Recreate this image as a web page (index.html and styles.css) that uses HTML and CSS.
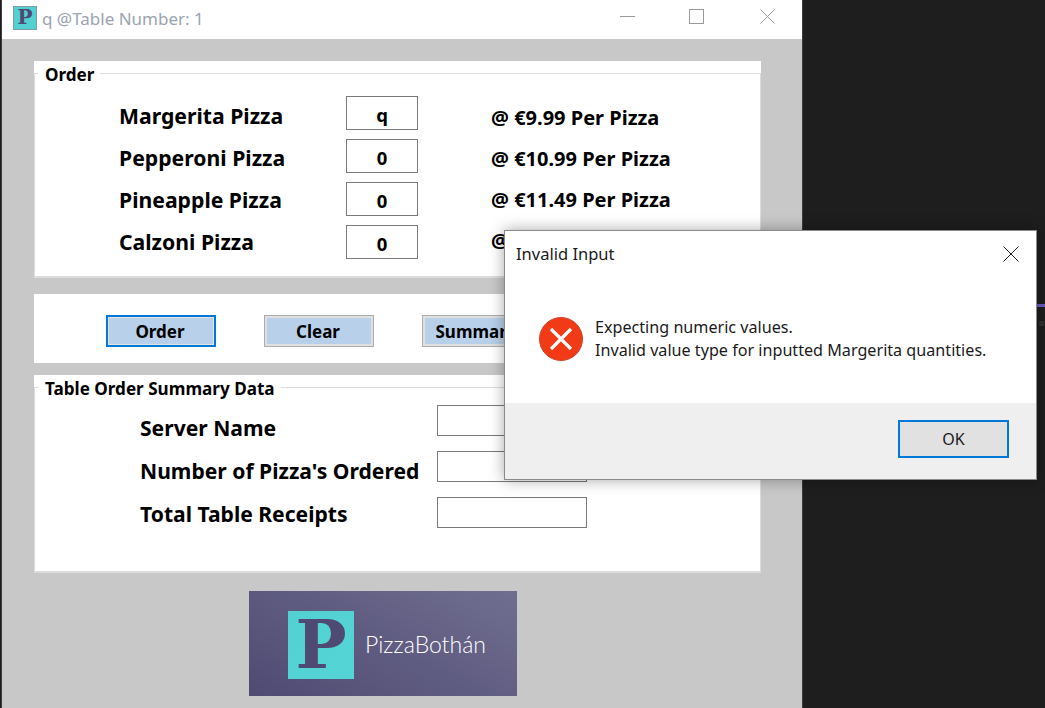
FILE: index.html
```html
<!DOCTYPE html>
<html lang="en">
<head>
<meta charset="utf-8">
<title>q @Table Number: 1</title>
<link rel="stylesheet" href="styles.css">
</head>
<body>
<div class="desktop">
  <div class="accent-line"></div>
  <div class="accent-dots"></div>
  <main class="app-window">
    <header class="titlebar">
      <span class="app-icon">P</span>
      <span class="app-title">q @Table Number: 1</span>
      <div class="window-controls">
        <svg class="ctl ctl-min" width="15" height="15" viewBox="0 0 15 15"><path d="M0 7.5H15" stroke="#9a9a9a" fill="none"/></svg>
        <svg class="ctl ctl-max" width="15" height="15" viewBox="0 0 15 15"><rect x="0.5" y="0.5" width="14" height="14" stroke="#9a9a9a" fill="none"/></svg>
        <svg class="ctl ctl-close" width="15" height="15" viewBox="0 0 15 15"><path d="M0.5 0.5L14.5 14.5M14.5 0.5L0.5 14.5" stroke="#9a9a9a" fill="none"/></svg>
      </div>
    </header>
    <div class="content">
      <section class="panel panel-order">
        <fieldset class="group group-order">
          <legend>Order</legend>
          <div class="order-grid">
            <div class="col col-names">
              <span>Margerita Pizza</span>
              <span>Pepperoni Pizza</span>
              <span>Pineapple Pizza</span>
              <span>Calzoni Pizza</span>
            </div>
            <div class="col col-qty">
              <div class="qty">q</div>
              <div class="qty">0</div>
              <div class="qty">0</div>
              <div class="qty">0</div>
            </div>
            <div class="col col-price">
              <span>@ €9.99 Per Pizza</span>
              <span>@ €10.99 Per Pizza</span>
              <span>@ €11.49 Per Pizza</span>
              <span>@</span>
            </div>
          </div>
        </fieldset>
      </section>
      <section class="panel panel-actions">
        <button class="btn btn-focus">Order</button>
        <button class="btn">Clear</button>
        <button class="btn">Summary</button>
      </section>
      <section class="panel panel-summary">
        <fieldset class="group group-summary">
          <legend>Table Order Summary Data</legend>
          <div class="summary-grid">
            <div class="col col-labels">
              <span>Server Name</span>
              <span>Number of Pizza's Ordered</span>
              <span>Total Table Receipts</span>
            </div>
            <div class="col col-fields">
              <div class="field"></div>
              <div class="field"></div>
              <div class="field"></div>
            </div>
          </div>
        </fieldset>
      </section>
      <div class="logo">
        <span class="logo-mark">P</span>
        <span class="logo-name">PizzaBothán</span>
      </div>
    </div>
  </main>
  <div class="dialog" role="alertdialog">
    <div class="dialog-head">
      <span class="dialog-title">Invalid Input</span>
      <svg class="dialog-close" width="16" height="16" viewBox="0 0 16 16"><path d="M0.5 0.5L15.5 15.5M15.5 0.5L0.5 15.5" stroke="#1a1a1a" fill="none"/></svg>
    </div>
    <div class="dialog-body">
      <svg class="err-icon" width="44" height="44" viewBox="0 0 44 44">
        <circle cx="22" cy="22" r="21.5" fill="#f23a17" stroke="#c9452c" stroke-width="1"/>
        <path d="M12 12L32 32M32 12L12 32" stroke="#fff" stroke-width="3.2" fill="none"/>
      </svg>
      <div class="dialog-msg">
        <p>Expecting numeric values.</p>
        <p>Invalid value type for inputted Margerita quantities.</p>
      </div>
    </div>
    <div class="dialog-foot">
      <button class="ok">OK</button>
    </div>
  </div>
</div>
</body>
</html>
```
FILE: styles.css
```css
* { box-sizing: border-box; }
html, body { margin: 0; padding: 0; }
body { width: 1045px; height: 708px; overflow: hidden; background: #1e1e1e; font-family: "Noto Sans", "Open Sans", sans-serif; }
.desktop { position: relative; width: 1045px; height: 708px; background: #1e1e1e; overflow: hidden; }
.accent-line { position: absolute; left: 1037px; top: 304px; width: 8px; height: 3px; background: #6a5cc0; }
.accent-dots { position: absolute; left: 1039px; top: 321px; width: 5px; height: 5px; background: #303030; }

.app-window { position: absolute; left: 2px; top: 0; width: 800px; height: 708px; background: #c8c8c8; display: flex; flex-direction: column; box-shadow: 1px 0 0 #3c3c3c, -1px 0 0 #3c3c3c; }
.titlebar { height: 39px; background: #fff; display: flex; align-items: center; padding-left: 11px; flex: none; }
.app-icon { width: 24px; height: 24px; margin-top: -4px; background: #52d0d2; border: 1px solid #7f9ea3; color: #4f4a73; font: 700 20px/21px "DejaVu Serif", serif; text-align: center; flex: none; }
.app-title { margin-left: 5px; margin-top: -3px; font-size: 17px; color: #9aa3b0; white-space: nowrap; }
.window-controls { margin-left: auto; display: flex; align-items: flex-start; gap: 54px; padding-right: 27px; margin-top: -7px; }
.ctl { display: block; }
.ctl-close { margin-left: 2px; }

.content { padding: 22px 0 0 32px; display: flex; flex-direction: column; align-items: flex-start; }
.panel { width: 727px; background: #fff; flex: none; }
.panel-order { height: 217px; }
.panel-actions { height: 69px; margin-top: 16px; padding: 21px 0 0 72px; display: flex; gap: 48px; align-items: flex-start; }
.panel-summary { height: 198px; margin-top: 12px; }

.group { margin: 0; padding: 0; height: 100%; border: solid #dcdcdc; border-width: 1px 1px 2px 1px; min-width: 0; }
.group legend { margin-left: 3px; padding: 3px 6px 0 7px; font-weight: 700; font-size: 17.1px; line-height: 21px; color: #000; }

.col { display: flex; flex-direction: column; }
.order-grid { display: flex; padding: 11px 0 0 84px; }
.col-names { width: 227px; gap: 13px; padding-top: 5px; font-weight: 700; font-size: 21.2px; line-height: 29px; color: #000; white-space: nowrap; }
.col-qty { width: 145px; gap: 9px; }
.qty { width: 72px; height: 34px; border: 1px solid #7a7a7a; background: #fff; font-weight: 700; font-size: 18.5px; line-height: 35px; text-align: center; color: #000; }
.col-price { gap: 14px; padding-top: 8px; font-weight: 700; font-size: 20px; line-height: 27px; color: #000; white-space: nowrap; }

.btn { width: 110px; height: 32px; padding: 2px 2px 0 0; background: #b9d0ea; border: 1px solid #adadad; outline: 2px solid #e0e0e0; outline-offset: -3px; font: 700 17px/24px "Noto Sans", sans-serif; color: #000; }
.btn-focus { border: 2px solid #0078d7; outline: 1px solid #e4e4e4; outline-offset: -3px; }

.summary-grid { display: flex; padding-left: 105px; }
.col-labels { width: 297px; gap: 14px; padding-top: 14px; font-weight: 700; font-size: 21.1px; line-height: 29px; color: #000; white-space: nowrap; }
.col-fields { gap: 15px; padding-top: 6px; }
.field { width: 150px; height: 31px; border: 1px solid #7a7a7a; background: #fff; }

.logo { width: 268px; height: 105px; margin: 18px 0 0 215px; background: linear-gradient(30deg, #4f4a72, #706e90); display: flex; align-items: center; padding-left: 39px; flex: none; }
.logo-mark { width: 66px; height: 68px; margin-top: 3px; background: linear-gradient(135deg, #52d0d2, #55d4d6); color: #4f4a73; font: 700 68px/66px "DejaVu Serif", serif; text-align: center; flex: none; }
.logo-name { margin-left: 11px; font-family: Lato, sans-serif; font-weight: 300; font-size: 23px; color: #fff; white-space: nowrap; }

.dialog { position: absolute; left: 504px; top: 230px; width: 533px; height: 250px; background: #fff; border: 1px solid #8a8a8a; box-shadow: 0 0 14px rgba(0,0,0,.35); display: flex; flex-direction: column; }
.dialog-head { height: 44px; display: flex; align-items: center; justify-content: space-between; padding: 0 17px 0 11px; flex: none; }
.dialog-title { font-size: 16.5px; color: #1a1a1a; }
.dialog-close { display: block; margin-top: 1px; }
.dialog-body { flex: 1; display: flex; align-items: flex-start; padding: 42px 0 0 34px; }
.err-icon { display: block; flex: none; }
.dialog-msg { margin-left: 12px; margin-top: -1px; font-size: 16.15px; line-height: 23px; color: #1a1a1a; white-space: nowrap; }
.dialog-msg p { margin: 0; }
.dialog-foot { height: 76px; background: #efefef; padding: 17px 27px 0 0; display: flex; justify-content: flex-end; align-items: flex-start; flex: none; }
.ok { width: 111px; height: 38px; padding: 0; background: #e1e1e1; border: 2px solid #0078d7; font: 400 16px/24px "Noto Sans", sans-serif; color: #1a1a1a; }
```
